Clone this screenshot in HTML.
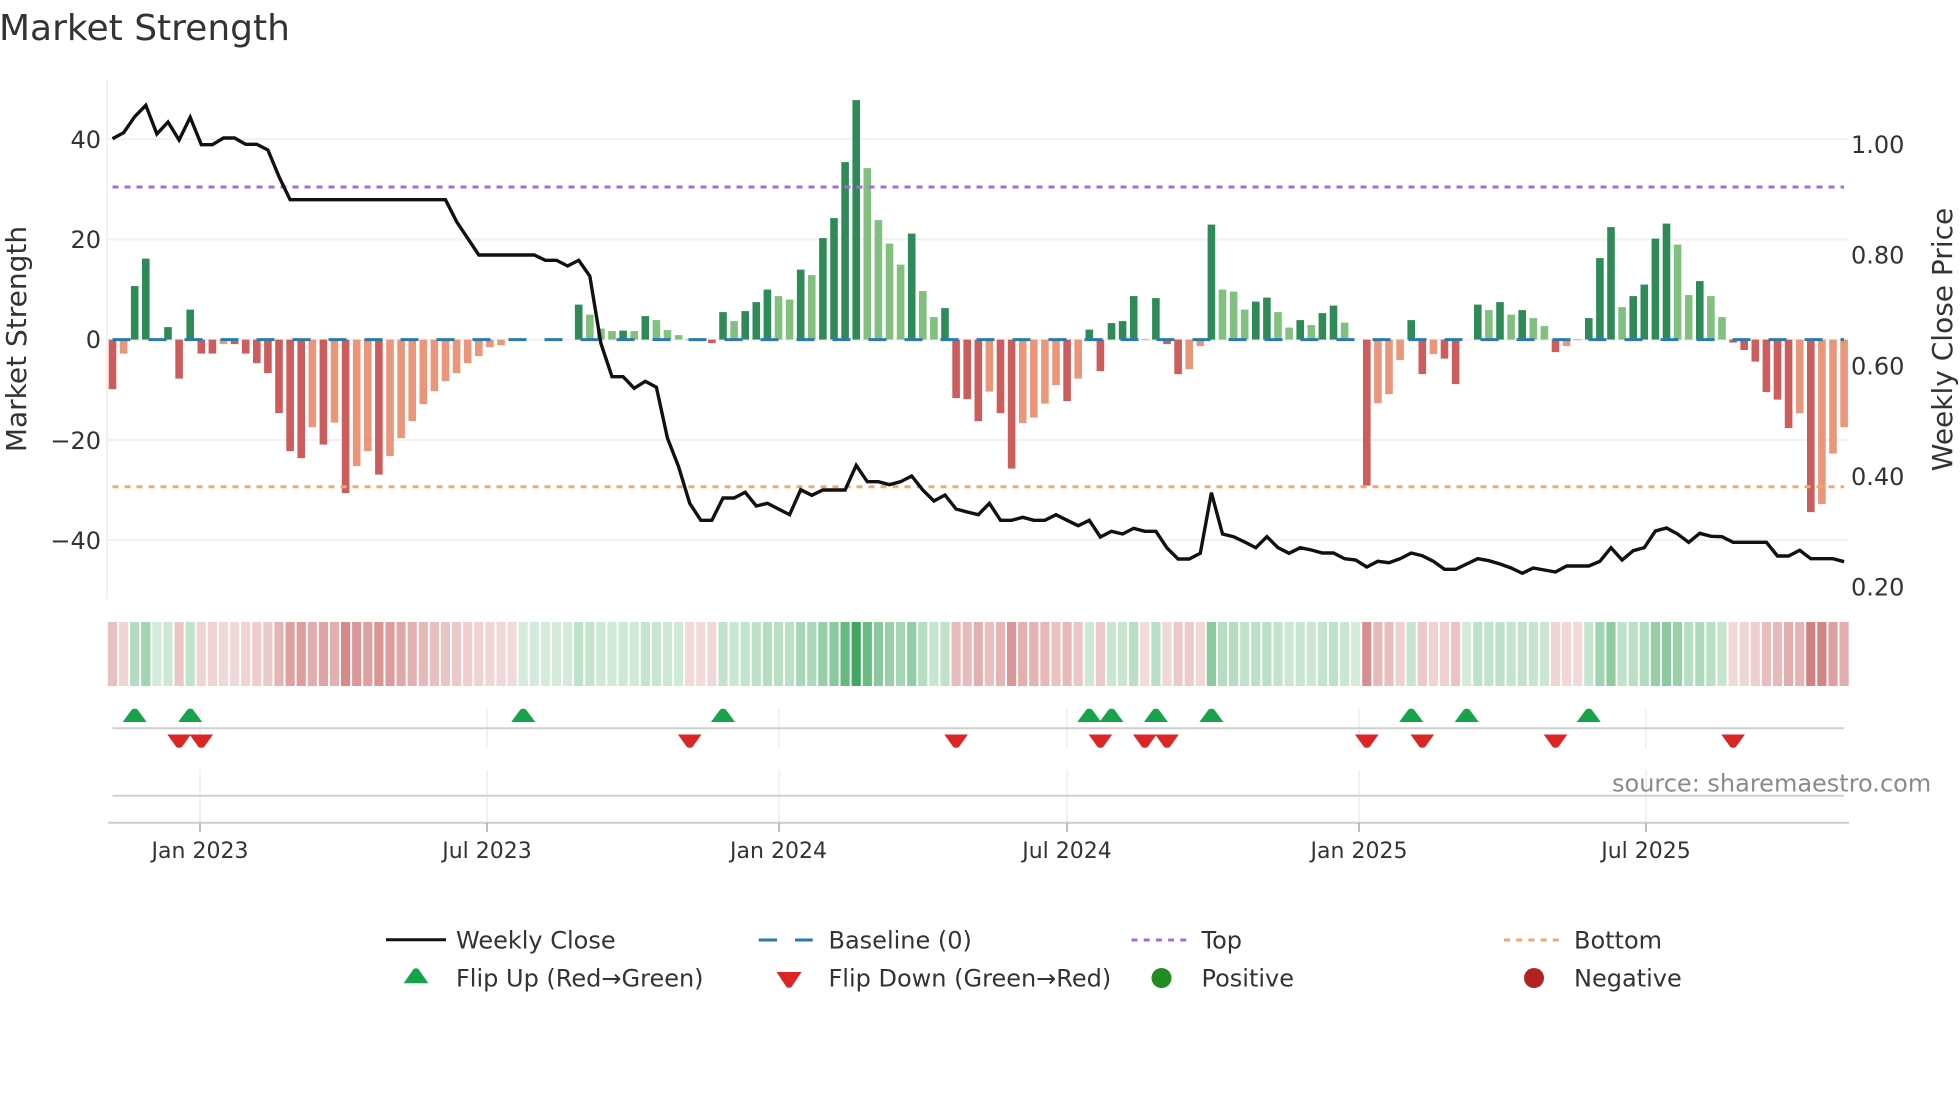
<!DOCTYPE html>
<html lang="en">
<head>
<meta charset="utf-8">
<title>Market Strength</title>
<style>
html,body{margin:0;padding:0;background:#fff;width:1960px;height:1102px;overflow:hidden}
svg{position:absolute;left:0;top:0;display:block}
text{font-family:"DejaVu Sans",sans-serif;fill:#333}
.yt{font-size:24px;text-anchor:end}
.rt{font-size:24px}
.xt{font-size:22px;text-anchor:middle}
.lg{font-size:24px}
</style>
</head>
<body>
<svg id="c" xmlns="http://www.w3.org/2000/svg" width="1960" height="1102" viewBox="0 0 1960 1102">
<rect width="1960" height="1102" fill="#fff"/>
<text x="-1" y="40" font-size="36">Market Strength</text>

<!-- main panel grid -->
<g stroke="#f1f1f1" stroke-width="2" fill="none">
<path d="M107 80V599"/>
<path d="M107 139.3H1848M107 239.5H1848M107 339.6H1848M107 440H1848M107 540H1848"/>
</g>
<g id="bars"></g>
<g fill="none">
<path d="M112.5 339.6H1844" stroke="#2a7bab" stroke-width="3" stroke-dasharray="18 18"/>
<path d="M112.5 187H1844" stroke="#a56cd8" stroke-width="3" stroke-dasharray="6 6"/>
<path d="M112.5 486.7H1844" stroke="#f2a868" stroke-width="3" stroke-dasharray="6 6"/>
<path id="price" stroke="#111" stroke-width="3.4" stroke-linejoin="miter"/>
</g>

<!-- left ticks -->
<text class="yt" x="101" y="148">40</text>
<text class="yt" x="101" y="248">20</text>
<text class="yt" x="101" y="348">0</text>
<text class="yt" x="101" y="449">−20</text>
<text class="yt" x="101" y="549">−40</text>
<text font-size="28" text-anchor="middle" transform="translate(26 339) rotate(-90)">Market Strength</text>

<!-- right ticks -->
<text class="rt" x="1851" y="153">1.00</text>
<text class="rt" x="1851" y="263.7">0.80</text>
<text class="rt" x="1851" y="374.4">0.60</text>
<text class="rt" x="1851" y="485">0.40</text>
<text class="rt" x="1851" y="595.5">0.20</text>
<text font-size="28" text-anchor="middle" transform="translate(1952 339.5) rotate(-90)">Weekly Close Price</text>

<!-- heat strip -->
<g id="heat"></g>

<!-- flip strip / lower panels -->
<g stroke="#ededed" stroke-width="1.5" fill="none">
<path d="M200 709V748M487 709V748M779 709V748M1067 709V748M1359 709V748M1646 709V748"/>
<path d="M200 770V822M487 770V822M779 770V822M1067 770V822M1359 770V822M1646 770V822"/>
</g>
<g stroke="#cfcfcf" stroke-width="2" fill="none">
<path d="M112.5 728.3H1844"/>
<path d="M112.5 795.7H1844"/>
<path d="M108 822.7H1849"/>
</g>
<path d="M200 823V832M487 823V832M779 823V832M1067 823V832M1359 823V832M1646 823V832" stroke="#a8a8a8" stroke-width="1.5" fill="none"/>
<g id="flips"></g>

<text x="1612" y="791.7" font-size="24" style="fill:#8a8a8a">source: sharemaestro.com</text>

<text class="xt" x="200" y="858">Jan 2023</text>
<text class="xt" x="487" y="858">Jul 2023</text>
<text class="xt" x="778.5" y="858">Jan 2024</text>
<text class="xt" x="1067" y="858">Jul 2024</text>
<text class="xt" x="1359" y="858">Jan 2025</text>
<text class="xt" x="1646" y="858">Jul 2025</text>

<!-- legend -->
<path d="M386 939.7H446" stroke="#111" stroke-width="3" fill="none"/>
<text class="lg" x="456" y="948.5">Weekly Close</text>
<path d="M758.7 940H777M795 940H812.7" stroke="#2a7bab" stroke-width="3" fill="none"/>
<text class="lg" x="828.5" y="948.5">Baseline (0)</text>
<path d="M1131.5 940H1186.5" stroke="#a56cd8" stroke-width="3" stroke-dasharray="6 6.2" fill="none"/>
<text class="lg" x="1201.5" y="948.5">Top</text>
<path d="M1504 940H1559" stroke="#f2a868" stroke-width="3" stroke-dasharray="6 6.2" fill="none"/>
<text class="lg" x="1574" y="948.5">Bottom</text>

<path d="M413.5 969Q416 967.4 418.500 969L428.3 983.3H403.7Z" fill="#16a34a"/>
<text class="lg" x="456" y="986.7">Flip Up (Red→Green)</text>
<path d="M776.5 972H801.5L791.500 987Q789 988.600 786.500 987Z" fill="#dc2626"/>
<text class="lg" x="828.5" y="986.7">Flip Down (Green→Red)</text>
<circle cx="1161.5" cy="978" r="10" fill="#228b22"/>
<text class="lg" x="1201.5" y="986.7">Positive</text>
<circle cx="1534" cy="978" r="10" fill="#b22222"/>
<text class="lg" x="1574" y="986.7">Negative</text>
</svg>
<script>
(function(){
var NS="http://www.w3.org/2000/svg",X0=112.5,DX=11.1;
function cx(i){return X0+DX*i}
function el(p,n,a){var e=document.createElementNS(NS,n);for(var k in a)e.setAttribute(k,a[k]);p.appendChild(e);return e}
// ~ prefix = light shade
var T=("-9.9 ~-2.8 10.7 16.2 0 2.5 -7.8 6 -2.8 -2.8 ~-0.9 -0.9 -2.8 -4.7 -6.7 -14.7 -22.3 -23.7 ~-17.5 -21 ~-16.6 -30.7 ~-25.3 ~-22.3 -27 ~-23.3 ~-19.7 ~-16.3 ~-12.9 ~-10.3 ~-8.3 ~-6.7 ~-4.7 ~-3.3 ~-1.5 ~-1.1 ~-0.2 0 0 0 0 0 "+
"7 ~5 ~2.2 ~1.7 1.8 ~1.7 4.7 ~3.9 ~1.9 ~0.9 -0.1 -0.3 -0.7 5.5 ~3.7 5.7 7.5 10 ~8.7 ~8 14 ~12.9 20.3 24.3 35.5 47.9 ~34.3 ~23.9 ~19.2 ~15 21.2 ~9.7 ~4.5 6.3 "+
"-11.7 -11.9 -16.3 ~-10.4 -14.7 -25.8 ~-16.7 ~-15.6 ~-12.8 ~-9.1 -12.3 ~-7.8 2 -6.3 3.3 3.7 8.7 -0.1 8.3 -0.9 -6.9 ~-5.9 ~-1.3 23 ~10 ~9.6 ~6 7.6 8.4 ~5.5 ~2.4 3.9 ~2.9 5.3 6.8 ~3.4 0 "+
"-29.2 ~-12.7 ~-10.9 ~-4.1 3.9 -6.9 ~-2.9 -3.8 -8.9 0 7 ~5.9 7.5 ~5 5.9 ~4.3 ~2.7 -2.5 ~-1.3 -0.1 4.3 16.3 22.5 ~6.5 8.7 11 20.2 23.2 ~19 ~8.9 11.7 ~8.7 ~4.5 -0.6 -2.1 -4.4 -10.5 -12 -17.7 ~-14.7 -34.5 ~-32.9 ~-22.8 ~-17.5").split(" ");
var bars=document.getElementById("bars"),heat=document.getElementById("heat"),Z=339.6;
T.forEach(function(t,i){
  var light=t.charAt(0)=="~",v=parseFloat(light?t.slice(1):t),c=cx(i),h=Math.abs(v)*5;
  if(h>0){
    var col=v>0?(light?"#81c07f":"#2e8b57"):(light?"#e9967a":"#cd5c5c");
    el(bars,"rect",{x:(c-3.8).toFixed(2),width:7.6,y:(v>0?Z-h:Z).toFixed(2),height:h.toFixed(2),fill:col});
  }
  var a=Math.min(.9,.19+.0135*Math.abs(v));
  el(heat,"rect",{x:(c-4.6).toFixed(2),width:9.2,y:622,height:64,fill:(v<0?"#bb3e3e":"#1a9641"),"fill-opacity":a.toFixed(3)});
});
// price line
var s1=[416,398,350,316,402,366,420,352,434,434,414,414,433,433,450,530,599,599,599,599,599,599,599,599,599,599,599,599,599,599,599,665,715,765,765,765,765,765,765,781,781,798,781,828,1030,1130,1130,1165,1144,1162];
var s2=[295,380,490,541,541,474,474,457,498,490,507,524,449,466,450,450,450,376,425,425,434,425,408,450,483,465,507,516,524,490,541,541,532,541,541,524,541,557,541,591,574,582,565,574,574,624,657,657,640,458,582,590,606,623,590,623,640];
var s3=[143,150,159,159,176,180,201,184,188,176,159,167,184,208,208,192,176,182,192,204,220,204,210,216,198,198,198,184,143,180,152,143,93,84,102,127,100,109,110,127,127,127,127,168,168,151,176,176,176,185];
var ys=s1.map(function(z){return z/3}).concat(s2.map(function(z){return 340+z/3})).concat(s3.map(function(z){return 500+z/3}));
document.getElementById("price").setAttribute("d",ys.map(function(y,i){return (i?"L":"M")+cx(i).toFixed(1)+" "+y.toFixed(1)}).join(""));
// flips
var f=document.getElementById("flips");
[2,7,37,55,88,90,94,99,117,122,133].forEach(function(i){var c=cx(i);
  el(f,"path",{d:"M"+(c-2.8)+" 709.5Q"+c+" 707.8 "+(c+2.8)+" 709.5L"+(c+12)+" 722H"+(c-12)+"Z",fill:"#16a34a"});});
[6,8,52,76,89,93,95,113,118,130,146].forEach(function(i){var c=cx(i);
  el(f,"path",{d:"M"+(c-11.8)+" 734.5H"+(c+11.8)+"L"+(c+2.8)+" 747Q"+c+" 748.6 "+(c-2.8)+" 747Z",fill:"#dc2626"});});
})();
</script>
</body>
</html>
